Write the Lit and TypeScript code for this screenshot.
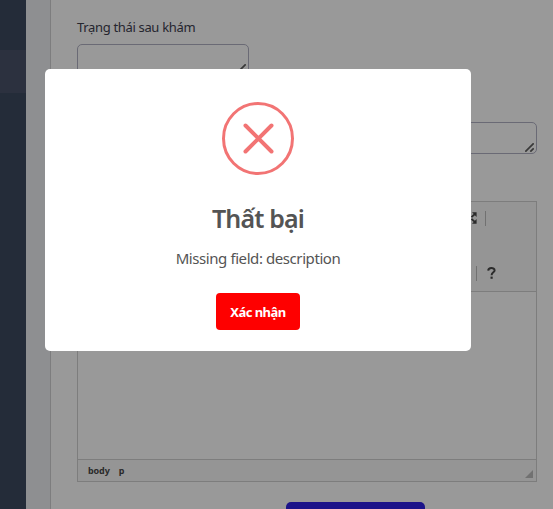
import { LitElement, html, css } from "lit";
import { customElement } from "lit/decorators.js";

const grip = html`<svg width="9" height="9" viewBox="0 0 9 9" fill="none" stroke="#606060" stroke-width="1.7">
  <path d="M0.3 8.7L8.7 0.3M5.3 8.7L8.7 5.3" />
</svg>`;

@customElement("visit-form")
class VisitForm extends LitElement {
  static styles = css`
    :host { display: flex; height: 100%; font-family: "Noto Sans", sans-serif; }
    .sidebar { width: 26px; flex: none; background: #3d4a60; padding-top: 50px; box-sizing: border-box; }
    .current { height: 43px; background: #4a5269; }
    .gutter { width: 24px; flex: none; background: #edeef2; border-right: 1px solid #d1d1d3; }
    .content { flex: none; width: 460px; padding: 17px 16px 0 26px; display: flex; flex-direction: column; background: #fff; overflow: hidden; }
    .label { height: 20px; line-height: 20px; font-size: 13px; letter-spacing: -0.33px; color: #40404f; white-space: nowrap; }
    .field { box-sizing: border-box; height: 32px; flex: none; border: 1px solid #b1b1c4; border-radius: 5px; display: flex; align-items: flex-end; justify-content: flex-end; padding: 1px 2px; }
    .short { width: 172px; margin: 7px 0 46px; padding-bottom: 2px; }
    .editor { box-sizing: border-box; flex: none; height: 281px; margin: 47px 0 20px; border: 1px solid #d1d1d1; display: flex; flex-direction: column; color: #484848; }
    .toolbar { height: 89px; background: #f8f8f8; border-bottom: 1px solid #d1d1d1; display: flex; flex-direction: column; align-items: flex-start; }
    .tools { display: flex; align-items: center; height: 16px; }
    .first { margin: 8px 0 0 391px; gap: 8px; }
    .second { margin: 39px 0 0 398px; gap: 10px; }
    .rule { width: 1px; height: 15px; background: #bcbcbc; }
    .tools svg { display: block; }
    .paper { flex: 1; }
    .path { box-sizing: border-box; height: 22px; border-top: 1px solid #d1d1d1; background: #f8f8f8; display: flex; align-items: center; gap: 9px; padding: 0 3px 0 10px; font-size: 9px; font-weight: 700; letter-spacing: -0.1px; }
    .corner { width: 8px; height: 8px; margin: 7px 0 0 auto; background: #bdbdbd; clip-path: polygon(100% 0, 100% 100%, 0 100%); }
    .submit { flex: none; height: 38px; width: 139px; margin-left: 209px; border-radius: 5px; background: #3020e4; }
  `;
  render() {
    return html`
      <div class="sidebar"><div class="current"></div></div>
      <div class="gutter"></div>
      <div class="content">
        <div class="label">Trạng thái sau khám</div>
        <div class="field short">${grip}</div>
        <div class="field">${grip}</div>
        <div class="editor">
          <div class="toolbar">
            <div class="tools first">
              <svg width="8" height="12" viewBox="0 0 8 12" fill="#484848" stroke="#484848">
                <path stroke="none" d="M3 0.3H7.6V4.9ZM3 11.7H7.6V7.1Z" />
                <path stroke-width="1.8" d="M5.8 2.1L2.5 5.2M5.8 9.9L2.5 6.8" />
              </svg>
              <span class="rule"></span>
            </div>
            <div class="tools second">
              <span class="rule"></span>
              <svg width="9" height="12" viewBox="0 0 9 12" fill="none" stroke="#484848">
                <path stroke-width="2" d="M1.2 3.6C1.4 0.3 7.6 0.3 7.6 3.4C7.6 5.3 4.6 5.4 4.6 8.3" />
                <path stroke-width="2.2" d="M4.6 9.6V11.8" />
              </svg>
            </div>
          </div>
          <div class="paper"></div>
          <div class="path"><span>body</span><span>p</span><span class="corner"></span></div>
        </div>
        <div class="submit"></div>
      </div>
    `;
  }
}

@customElement("error-dialog")
class ErrorDialog extends LitElement {
  static styles = css`
    :host { display: flex; flex-direction: column; align-items: center; box-sizing: border-box; width: 426px; height: 282px; padding-top: 33px; border-radius: 5px; background: #fff; font-family: "Noto Sans", sans-serif; color: #545454; }
    .icon { display: block; flex: none; }
    .title { margin-top: 23px; height: 40px; line-height: 40px; font-size: 25px; font-weight: 600; letter-spacing: -0.85px; white-space: nowrap; }
    .message { margin-top: 8px; height: 24px; line-height: 24px; font-size: 15px; letter-spacing: -0.42px; white-space: nowrap; }
    .confirm { flex: none; margin-top: 23px; width: 84px; height: 37px; padding: 0; border: 0; border-radius: 4px; background: #fe0000; color: #fff; font: 700 13px "Noto Sans", sans-serif; letter-spacing: -0.55px; white-space: nowrap; }
  `;
  render() {
    return html`
      <svg class="icon" width="72" height="73" viewBox="0 0 72 73" fill="none" stroke="#f27474">
        <ellipse cx="36" cy="36.5" rx="34.5" ry="35" stroke-width="3" />
        <path d="M23.5 23.5L49.5 49.5M49.5 23.5L23.5 49.5" stroke-width="4" stroke-linecap="round" />
      </svg>
      <div class="title">Thất bại</div>
      <div class="message">Missing field: description</div>
      <button class="confirm">Xác nhận</button>
    `;
  }
}

@customElement("app-root")
class AppRoot extends LitElement {
  static styles = css`
    :host { display: block; position: relative; height: 509px; overflow: hidden; background: #fff; }
    .backdrop { position: absolute; inset: 0; box-sizing: border-box; padding: 69px 0 0 45px; background: rgba(0, 0, 0, 0.4); }
  `;
  render() {
    return html`
      <visit-form></visit-form>
      <div class="backdrop"><error-dialog></error-dialog></div>
    `;
  }
}
